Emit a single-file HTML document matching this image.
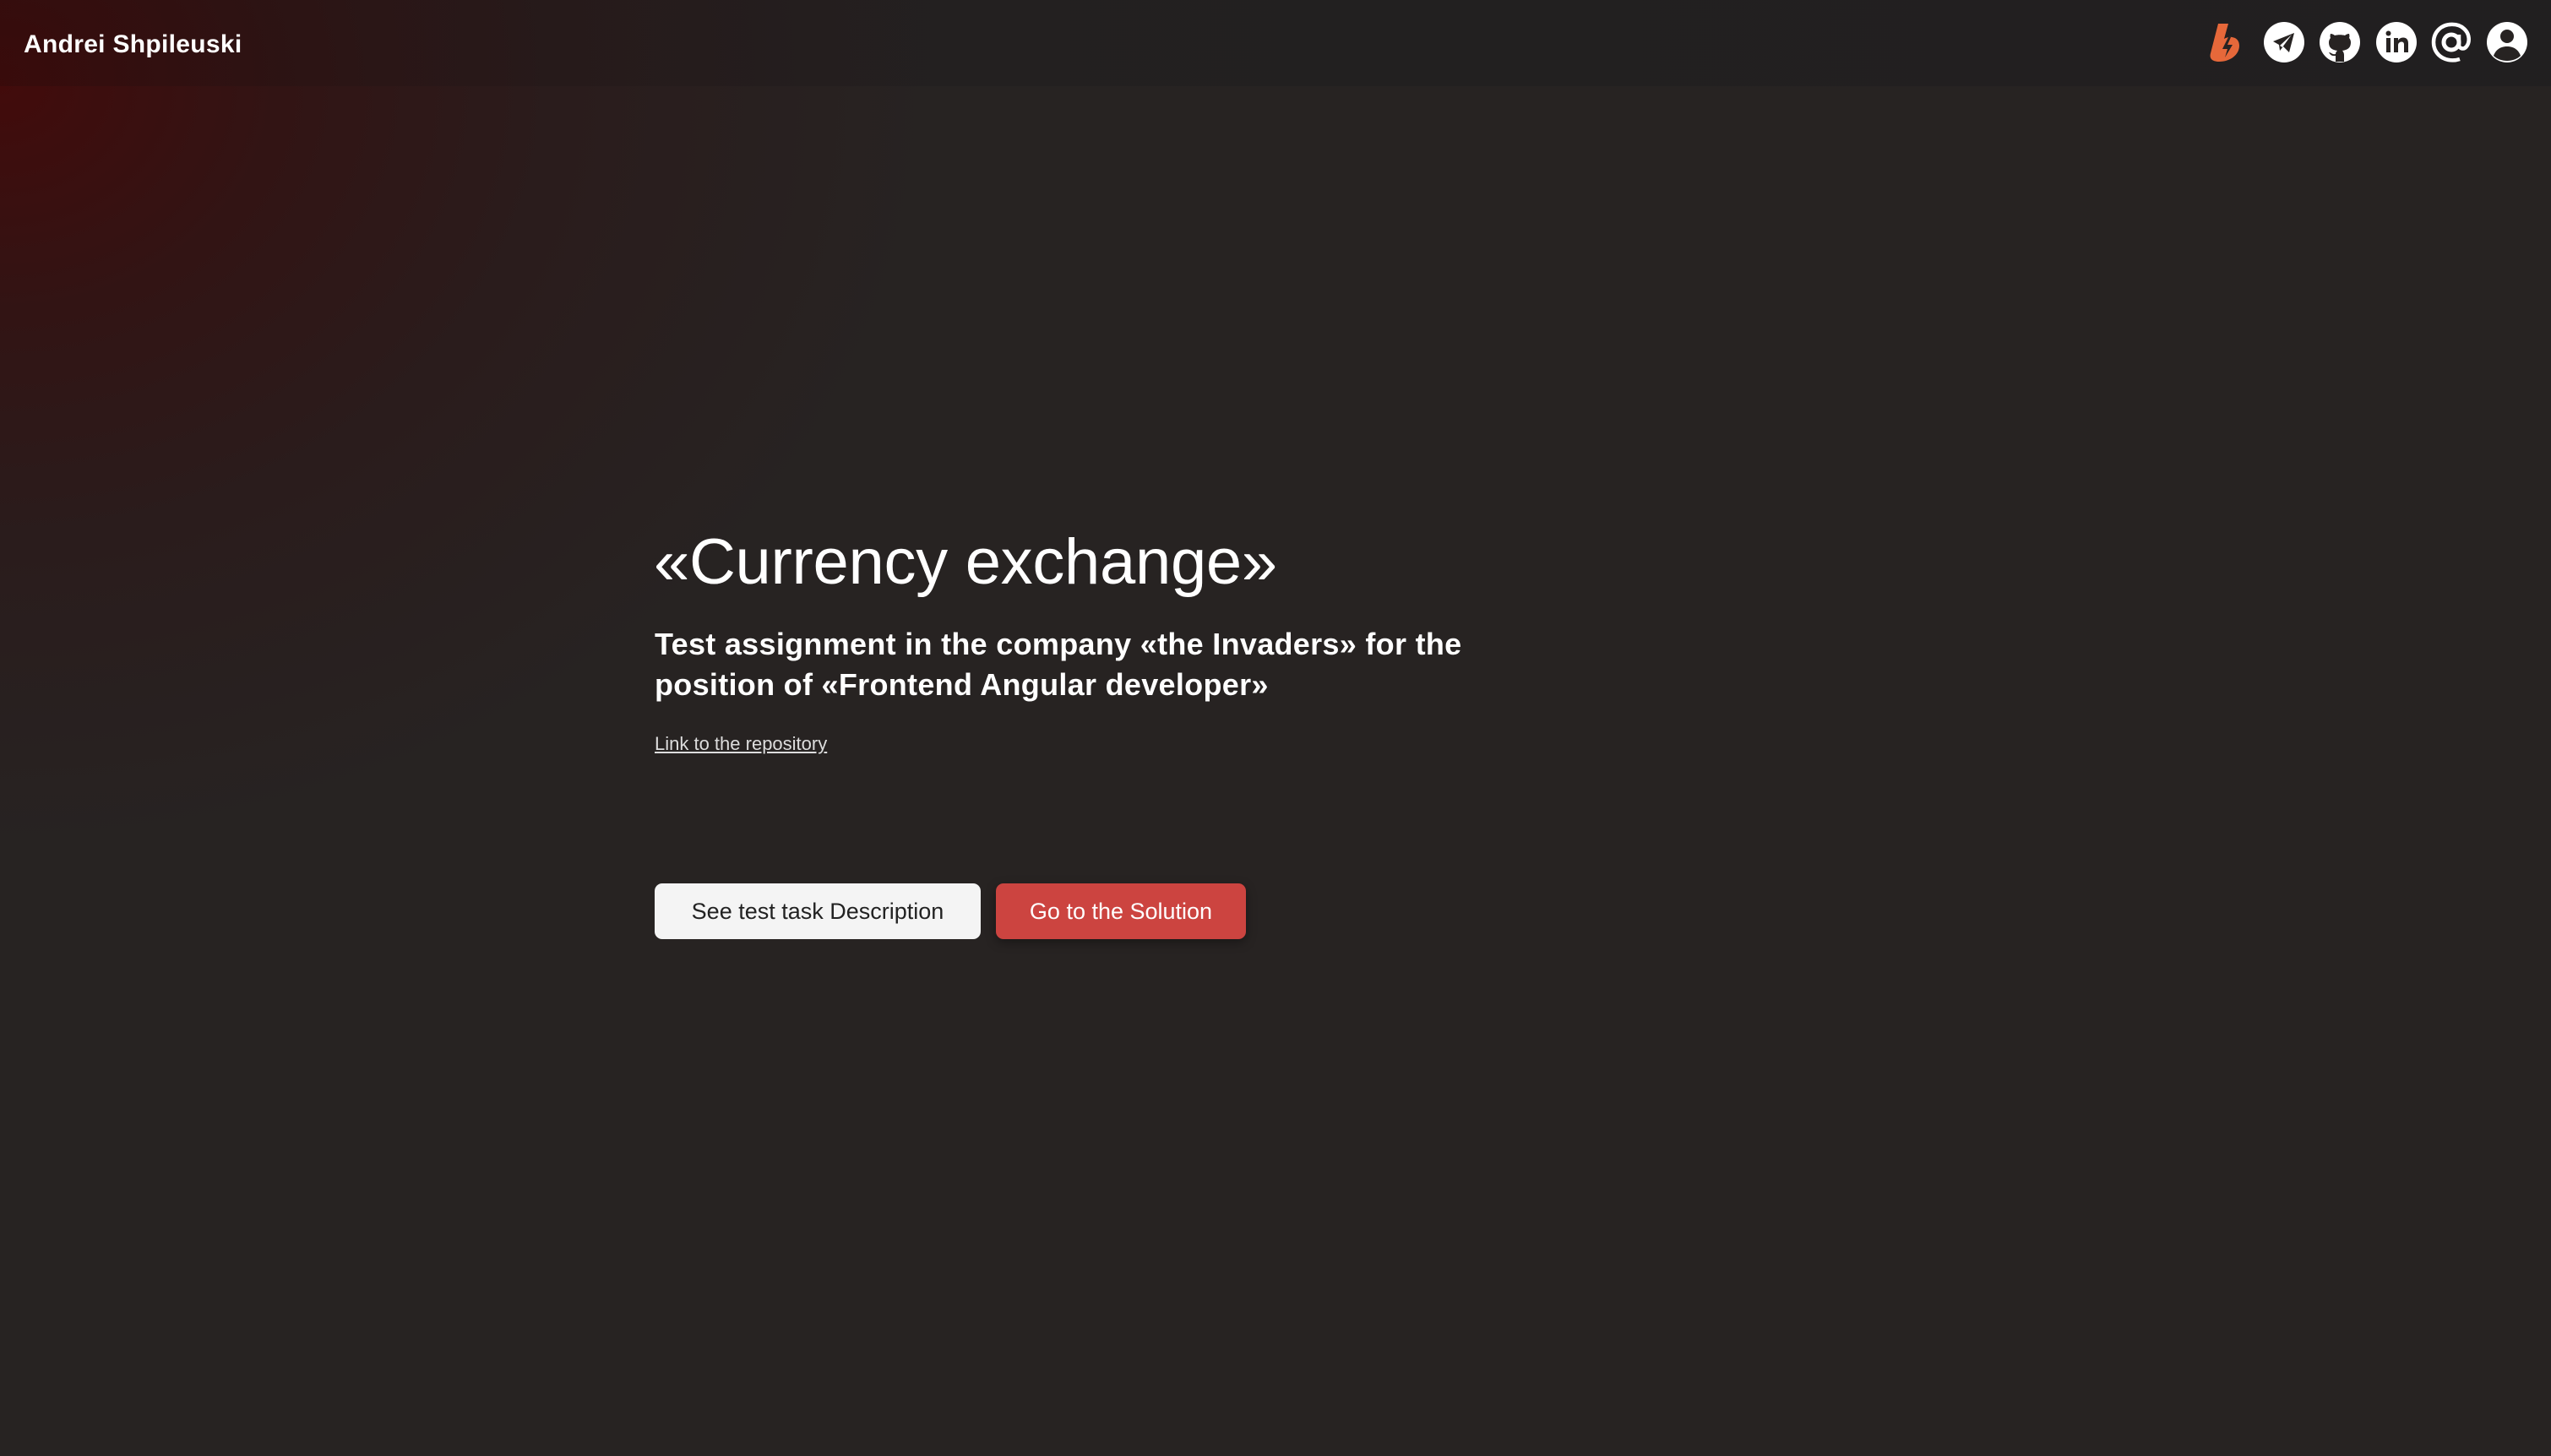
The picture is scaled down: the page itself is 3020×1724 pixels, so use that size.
<!DOCTYPE html>
<html><head><meta charset="utf-8"><style>
*{margin:0;padding:0;box-sizing:border-box}
html,body{width:3020px;height:1724px;overflow:hidden}
body{font-family:"Liberation Sans",sans-serif;color:#fff;
background:radial-gradient(ellipse 1100px 900px at 0px 100px,#420b0b 0%,#321414 30%,#2a1c1c 60%,rgba(39,35,34,0) 100%),#272322;position:relative}
.hdr{position:absolute;left:0;top:0;width:3020px;height:102px;background:linear-gradient(90deg,rgba(40,10,10,.35),rgba(32,30,31,.6) 40%,rgba(32,30,31,.85))}
.name{position:absolute;left:28px;top:36px;font-size:30px;font-weight:bold;letter-spacing:0.3px}
.ic{position:absolute;top:26px;width:48px;height:48px}
h1{position:absolute;left:774px;top:622px;font-size:76px;font-weight:normal;white-space:nowrap;letter-spacing:-0.3px}
.sub{position:absolute;left:775px;top:739px;font-size:36px;font-weight:bold;line-height:48px;white-space:nowrap;letter-spacing:0.3px}
.lnk{position:absolute;left:775px;top:868px;font-size:22px;color:#ddd;text-decoration:underline}
.b{position:absolute;top:1046px;height:66px;border-radius:9px;font-size:27px;display:flex;align-items:center;justify-content:center}
.b1{left:775px;width:386px;background:#f4f4f4;color:#222}
.b2{left:1179px;width:296px;background:#cc4440;color:#fff;box-shadow:0 4px 12px rgba(0,0,0,.35)}
</style></head><body>
<div class="hdr"></div>
<div class="name">Andrei Shpileuski</div>
<svg class="ic" style="left:2614px" viewBox="0 0 48 48"><path d="M12 2h12l-5 18c6-4 18-3 18 8 0 11-11 19-24 19-7 0-12-3-10-10z" fill="#e6683a"/><path d="M24 18l-7 14h6l-3 10 9-15h-6l4-9z" fill="#272322"/></svg>
<svg class="ic" style="left:2680px" viewBox="0 0 48 48"><circle cx="24" cy="24" r="24" fill="#fff"/><path d="M11 23l25-10-6 23-7-7-4 5-1-7z" fill="#272322"/><path d="M19 28l14-13-11 15z" fill="#fff"/></svg>
<svg class="ic" style="left:2746px" viewBox="0 0 48 48"><circle cx="24" cy="24" r="24" fill="#fff"/><path d="M19 47v-7c-6 1-7-3-8-4 3 0 4 3 8 2 0-2 1-3 2-4-6-1-10-3-10-10 0-2 1-4 2-5-1-2 0-5 0-5s3 0 5 2c3-1 9-1 12 0 2-2 5-2 5-2s1 3 0 5c1 1 2 3 2 5 0 7-4 9-10 10 1 1 2 3 2 5v8z" fill="#272322"/></svg>
<svg class="ic" style="left:2813px" viewBox="0 0 48 48"><circle cx="24" cy="24" r="24" fill="#fff"/><rect x="12" y="19" width="5" height="17" fill="#272322"/><circle cx="14.5" cy="13.5" r="3" fill="#272322"/><path d="M21 19h5v3c1-2 3-3.5 6-3.5 4 0 6 2.5 6 7V36h-5v-9c0-2.5-1-3.5-3-3.5s-4 1.5-4 4V36h-5z" fill="#272322"/></svg>
<svg class="ic" style="left:2878px" viewBox="0 0 48 48"><circle cx="24" cy="24" r="9" fill="none" stroke="#fff" stroke-width="5"/><path d="M33 15v12c0 5 6 6 9 2 4-5 4-15-3-21C32 1 17 1 9 9 1 17 1 31 9 39c6 6 16 8 25 5" fill="none" stroke="#fff" stroke-width="4.5"/></svg>
<svg class="ic" style="left:2944px" viewBox="0 0 48 48"><circle cx="24" cy="24" r="24" fill="#fff"/><circle cx="24" cy="17" r="8" fill="#272322"/><path d="M8 40c3-8 9-11 16-11s13 3 16 11c-4 4-10 6-16 6S12 44 8 40z" fill="#272322"/></svg>
<h1>«Currency exchange»</h1>
<div class="sub">Test assignment in the company «the Invaders» for the<br>position of «Frontend Angular developer»</div>
<div class="lnk">Link to the repository</div>
<div class="b b1">See test task Description</div>
<div class="b b2">Go to the Solution</div>
</body></html>
